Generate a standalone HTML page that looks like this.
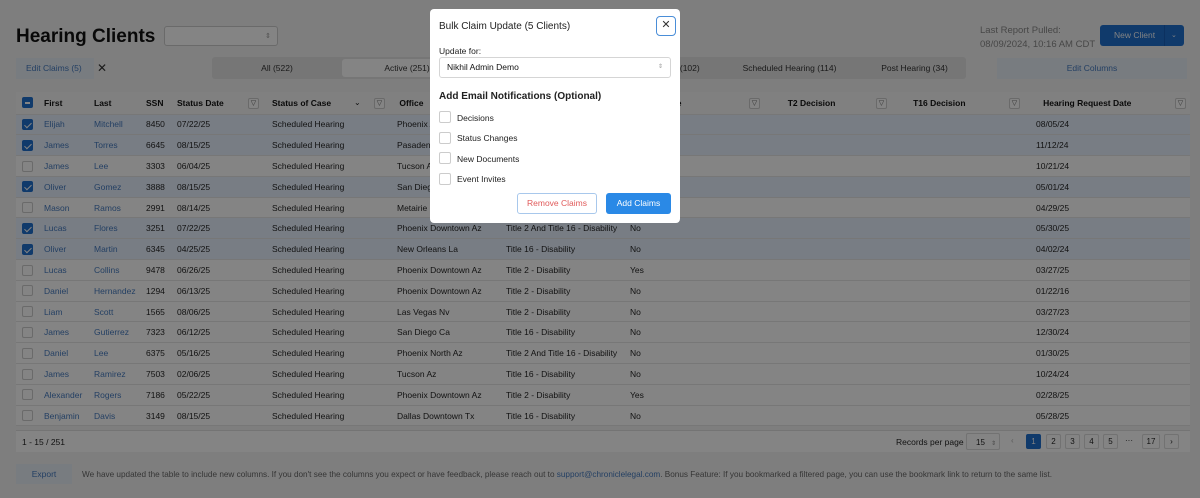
<!DOCTYPE html>
<html><head><meta charset="utf-8"><style>
*{box-sizing:border-box;margin:0;padding:0}
body{width:1200px;height:498px;overflow:hidden;background:#7e7e7e;font-family:"Liberation Sans",Arial,sans-serif;font-size:8.5px;color:#111;position:relative}
.abs{position:absolute}
h1{position:absolute;left:16px;top:26px;font-size:19px;font-weight:bold;color:#090909}
.sel{position:absolute;left:164px;top:26px;width:114px;height:20px;border:1px solid #6a6a6a;border-radius:3px;background:#848484}
.arr{position:absolute;font-size:7px;color:#4f4f4f}
.tabs{position:absolute;left:212px;top:57px;width:754px;height:22px;background:#767676;border-radius:3px}
.tab{position:absolute;top:0;height:22px;line-height:22px;text-align:center;color:#1a1a1a;font-size:8.5px}
table{position:absolute;left:16px;top:92px;width:1174px;border-collapse:collapse;table-layout:fixed;background:#848484}
td,th{height:20.8px;padding-left:6px;text-align:left;white-space:nowrap;overflow:hidden;border-bottom:1px solid #777;font-size:8.5px}
th{height:22px;font-weight:bold;color:#090909;background:#808080}
tr.s td{background:#787d84}
td a{color:#233f63;text-decoration:none}
.cb{display:inline-block;width:11px;height:11px;border:1px solid #6a6a6a;border-radius:2px;background:#848484;vertical-align:middle}
.cb.on{background:#103a6b;border-color:#103a6b;position:relative}
.cb.on:after{content:"";position:absolute;left:3px;top:1px;width:3px;height:6px;border:solid #848484;border-width:0 1.5px 1.5px 0;transform:rotate(45deg)}
.cb.ind{background:#103a6b;border-color:#103a6b;position:relative}
.cb.ind:after{content:"";position:absolute;left:2px;top:4px;width:5px;height:1.5px;background:#848484}
.fi{position:absolute;width:11px;height:11px;border:1px solid #6a6a6a;border-radius:2px;font-size:7px;line-height:9px;text-align:center;color:#2c2c2c;background:#848484}
.foot{position:absolute;left:16px;top:430px;width:1174px;height:22px;background:#848484;border-top:1px solid #747474}
.pg{position:absolute;top:434px;height:15px;width:15px;border:1px solid #727272;border-radius:2px;text-align:center;line-height:13px;font-size:8px;background:#848484}
.modal{position:absolute;left:430px;top:9px;width:250px;height:214px;background:#fff;border-radius:4px}
.m{position:absolute;font-size:8.5px;color:#222}
.mc{position:absolute;left:9px;width:12px;height:12px;border:1px solid #ccc;border-radius:2px}
</style></head><body>
<h1>Hearing Clients</h1>
<div class="sel"><span class="arr" style="left:100px;top:5px">⇕</span></div>
<div class="abs" style="left:980px;top:24px;color:#474747;font-size:9.5px;line-height:14px">Last Report Pulled:<br>08/09/2024, 10:16 AM CDT</div>
<div class="abs" style="left:1100px;top:25px;width:84px;height:21px;background:#103a6b;border-radius:3px;color:#848484;font-size:8.5px;line-height:21px"><span style="margin-left:14px">New Client</span><span style="position:absolute;left:64px;top:0;width:1px;height:21px;background:#0c3160"></span><span style="position:absolute;left:71px;font-size:7px">⌄</span></div>
<div class="abs" style="left:16px;top:58px;width:78px;height:21px;background:#787c80;color:#233f63;line-height:21px;padding-left:10px">Edit Claims (5)</div>
<div class="abs" style="left:97px;top:61px;font-size:12px;color:#1a1a1a">✕</div>
<div class="tabs">
<div class="tab" style="left:0;width:130px">All (522)</div>
<div class="tab" style="left:130px;width:130px;background:#848484;top:2px;height:18px;line-height:18px;border-radius:3px">Active (251)</div>
<div class="tab" style="left:440px;width:60px">lled (102)</div>
<div class="tab" style="left:510px;width:135px">Scheduled Hearing (114)</div>
<div class="tab" style="left:640px;width:125px">Post Hearing (34)</div>
</div>
<div class="abs" style="left:997px;top:58px;width:190px;height:21px;background:#787c80;color:#233f63;line-height:21px;text-align:center">Edit Columns</div>
<table>
<colgroup><col style="width:22px"><col style="width:50px"><col style="width:52px"><col style="width:31px"><col style="width:95px"><col style="width:125px"><col style="width:109px"><col style="width:124px"><col style="width:153px"><col style="width:123px"><col style="width:130px"><col style="width:160px"></colgroup>
<tr><th><span class="cb ind"></span></th><th>First</th><th>Last</th><th>SSN</th><th>Status Date</th><th>Status of Case</th><th>&nbsp;Office</th><th>Claim Type</th><th>Critical Case</th><th>&nbsp;&nbsp;T2 Decision</th><th>&nbsp;&nbsp;&nbsp;T16 Decision</th><th>&nbsp;&nbsp;&nbsp;Hearing Request Date</th></tr>
<tr class="s"><td><span class="cb on"></span></td><td><a>Elijah</a></td><td><a>Mitchell</a></td><td>8450</td><td>07/22/25</td><td>Scheduled Hearing</td><td>Phoenix Az</td><td>Title 2 - Disability</td><td>No</td><td></td><td></td><td>08/05/24</td></tr>
<tr class="s"><td><span class="cb on"></span></td><td><a>James</a></td><td><a>Torres</a></td><td>6645</td><td>08/15/25</td><td>Scheduled Hearing</td><td>Pasadena Ca</td><td>Title 2 - Disability</td><td>No</td><td></td><td></td><td>11/12/24</td></tr>
<tr><td><span class="cb"></span></td><td><a>James</a></td><td><a>Lee</a></td><td>3303</td><td>06/04/25</td><td>Scheduled Hearing</td><td>Tucson Az</td><td>Title 2 - Disability</td><td>No</td><td></td><td></td><td>10/21/24</td></tr>
<tr class="s"><td><span class="cb on"></span></td><td><a>Oliver</a></td><td><a>Gomez</a></td><td>3888</td><td>08/15/25</td><td>Scheduled Hearing</td><td>San Diego Ca</td><td>Title 2 - Disability</td><td>No</td><td></td><td></td><td>05/01/24</td></tr>
<tr><td><span class="cb"></span></td><td><a>Mason</a></td><td><a>Ramos</a></td><td>2991</td><td>08/14/25</td><td>Scheduled Hearing</td><td>Metairie La</td><td>Title 2 - Disability</td><td>No</td><td></td><td></td><td>04/29/25</td></tr>
<tr class="s"><td><span class="cb on"></span></td><td><a>Lucas</a></td><td><a>Flores</a></td><td>3251</td><td>07/22/25</td><td>Scheduled Hearing</td><td>Phoenix Downtown Az</td><td>Title 2 And Title 16 - Disability</td><td>No</td><td></td><td></td><td>05/30/25</td></tr>
<tr class="s"><td><span class="cb on"></span></td><td><a>Oliver</a></td><td><a>Martin</a></td><td>6345</td><td>04/25/25</td><td>Scheduled Hearing</td><td>New Orleans La</td><td>Title 16 - Disability</td><td>No</td><td></td><td></td><td>04/02/24</td></tr>
<tr><td><span class="cb"></span></td><td><a>Lucas</a></td><td><a>Collins</a></td><td>9478</td><td>06/26/25</td><td>Scheduled Hearing</td><td>Phoenix Downtown Az</td><td>Title 2 - Disability</td><td>Yes</td><td></td><td></td><td>03/27/25</td></tr>
<tr><td><span class="cb"></span></td><td><a>Daniel</a></td><td><a>Hernandez</a></td><td>1294</td><td>06/13/25</td><td>Scheduled Hearing</td><td>Phoenix Downtown Az</td><td>Title 2 - Disability</td><td>No</td><td></td><td></td><td>01/22/16</td></tr>
<tr><td><span class="cb"></span></td><td><a>Liam</a></td><td><a>Scott</a></td><td>1565</td><td>08/06/25</td><td>Scheduled Hearing</td><td>Las Vegas Nv</td><td>Title 2 - Disability</td><td>No</td><td></td><td></td><td>03/27/23</td></tr>
<tr><td><span class="cb"></span></td><td><a>James</a></td><td><a>Gutierrez</a></td><td>7323</td><td>06/12/25</td><td>Scheduled Hearing</td><td>San Diego Ca</td><td>Title 16 - Disability</td><td>No</td><td></td><td></td><td>12/30/24</td></tr>
<tr><td><span class="cb"></span></td><td><a>Daniel</a></td><td><a>Lee</a></td><td>6375</td><td>05/16/25</td><td>Scheduled Hearing</td><td>Phoenix North Az</td><td>Title 2 And Title 16 - Disability</td><td>No</td><td></td><td></td><td>01/30/25</td></tr>
<tr><td><span class="cb"></span></td><td><a>James</a></td><td><a>Ramirez</a></td><td>7503</td><td>02/06/25</td><td>Scheduled Hearing</td><td>Tucson Az</td><td>Title 16 - Disability</td><td>No</td><td></td><td></td><td>10/24/24</td></tr>
<tr><td><span class="cb"></span></td><td><a>Alexander</a></td><td><a>Rogers</a></td><td>7186</td><td>05/22/25</td><td>Scheduled Hearing</td><td>Phoenix Downtown Az</td><td>Title 2 - Disability</td><td>Yes</td><td></td><td></td><td>02/28/25</td></tr>
<tr><td><span class="cb"></span></td><td><a>Benjamin</a></td><td><a>Davis</a></td><td>3149</td><td>08/15/25</td><td>Scheduled Hearing</td><td>Dallas Downtown Tx</td><td>Title 16 - Disability</td><td>No</td><td></td><td></td><td>05/28/25</td></tr>
</table>
<div class="fi" style="left:248px;top:98px">▽</div>
<div class="fi" style="left:374px;top:98px">▽</div>
<div class="fi" style="left:749px;top:98px">▽</div>
<div class="fi" style="left:876px;top:98px">▽</div>
<div class="fi" style="left:1009px;top:98px">▽</div>
<div class="fi" style="left:1175px;top:98px">▽</div>
<div class="abs" style="left:354px;top:98px;font-size:8px">⌄</div>
<div class="foot"><span class="abs" style="left:6px;top:6px">1 - 15 / 251</span><span class="abs" style="left:880px;top:6px">Records per page</span></div>
<div class="abs" style="left:966px;top:433px;width:34px;height:17px;border:1px solid #727272;border-radius:2px;background:#848484;padding:4px 0 0 9px;font-size:8px">15 <span style="font-size:6px;color:#474747;margin-left:4px">⇕</span></div>
<div class="abs" style="left:1011px;top:436px;color:#5a5a5a;font-size:8px">‹</div>
<div class="pg" style="left:1026px;background:#103a6b;color:#848484;border-color:#103a6b">1</div>
<div class="pg" style="left:1046px">2</div><div class="pg" style="left:1065px">3</div><div class="pg" style="left:1084px">4</div><div class="pg" style="left:1103px">5</div>
<div class="abs" style="left:1125px;top:436px;font-size:8px">···</div>
<div class="pg" style="left:1142px;width:18px">17</div><div class="pg" style="left:1164px">›</div>
<div class="abs" style="left:16px;top:464px;width:56px;height:20px;background:#787c80;color:#233f63;line-height:20px;text-align:center">Export</div>
<div class="abs" style="left:82px;top:470px;color:#353535;font-size:8.2px;white-space:nowrap">We have updated the table to include new columns. If you don't see the columns you expect or have feedback, please reach out to <span style="color:#233f63">support@chroniclelegal.com</span>. Bonus Feature: If you bookmarked a filtered page, you can use the bookmark link to return to the same list.</div>
<div class="modal">
<div class="m" style="left:9px;top:12px;font-size:10px">Bulk Claim Update (5 Clients)</div>
<div class="abs" style="left:226px;top:7px;width:20px;height:20px;border:1.5px solid #4a8ed8;border-radius:4px;text-align:center;line-height:17px;font-size:11px;color:#333">✕</div>
<div class="m" style="left:9px;top:37px;font-size:8.5px">Update for:</div>
<div class="abs" style="left:9px;top:48px;width:232px;height:21px;border:1px solid #d5d5d5;border-radius:3px;font-size:8.5px;line-height:19px;padding-left:7px">Nikhil Admin Demo<span style="position:absolute;right:7px;font-size:6px;color:#999">⇕</span></div>
<div class="m" style="left:9px;top:82px;font-size:10px;font-weight:bold">Add Email Notifications (Optional)</div>
<div class="mc" style="top:102px"></div><div class="m" style="left:27px;top:104px">Decisions</div>
<div class="mc" style="top:123px"></div><div class="m" style="left:27px;top:124px">Status Changes</div>
<div class="mc" style="top:143px"></div><div class="m" style="left:27px;top:145px">New Documents</div>
<div class="mc" style="top:164px"></div><div class="m" style="left:27px;top:165px">Event Invites</div>
<div class="abs" style="left:87px;top:184px;width:80px;height:21px;border:1px solid #a8c8ec;border-radius:3px;color:#e05a5a;text-align:center;line-height:19px;font-size:8.5px">Remove Claims</div>
<div class="abs" style="left:176px;top:184px;width:65px;height:21px;background:#2a89e6;border-radius:3px;color:#fff;text-align:center;line-height:21px;font-size:8.5px">Add Claims</div>
</div>
</body></html>
